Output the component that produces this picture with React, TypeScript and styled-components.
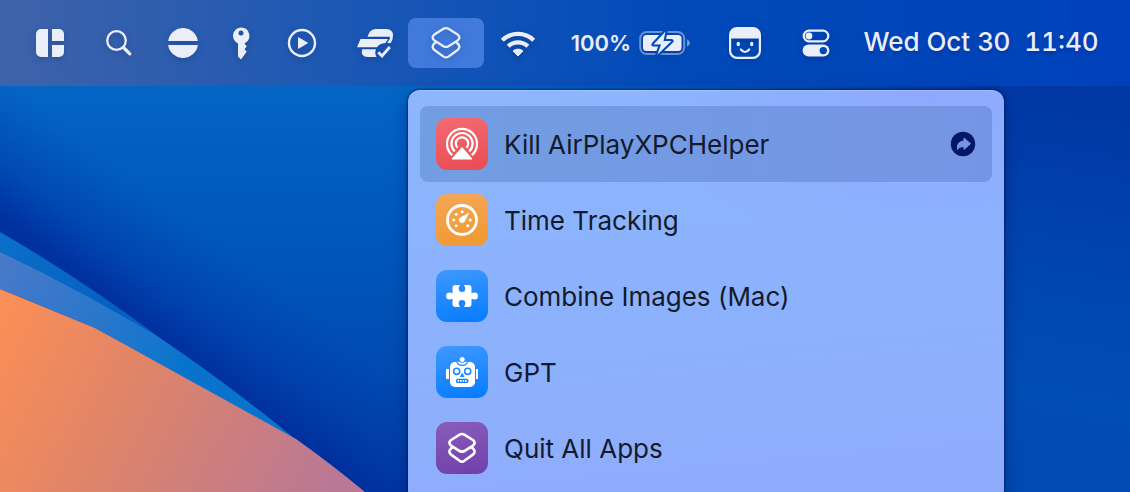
import React from 'react';
import styled, { createGlobalStyle } from 'styled-components';

const GlobalStyle = createGlobalStyle`
  * { box-sizing: border-box; }
  body { margin: 0; font-family: Inter, 'Liberation Sans', sans-serif; }
  button { font: inherit; color: inherit; border: 0; padding: 0; background: none; }
`;

const Desktop = styled.div`
  position: relative;
  min-height: 100vh;
  overflow: hidden;
  background: #0050b8;
`;

const Wallpaper = styled.svg`
  position: absolute;
  inset: 0;
  width: 100%;
  height: 100%;
`;

const MenuBar = styled.header`
  position: relative;
  display: flex;
  justify-content: flex-end;
  align-items: center;
  height: 86px;
  padding-right: 20px;
  color: #e9eef9;
  background: linear-gradient(90deg, #3f63a9 0%, #2059b3 27%, #1253b7 41%, #0149b9 62%, #0041ba 100%);
`;

const BarItem = styled.button<{ $width: number; $active?: boolean }>`
  position: relative;
  display: flex;
  align-items: center;
  justify-content: center;
  width: ${(p) => p.$width}px;
  height: 50px;
  border-radius: 8px;
  background: ${(p) => (p.$active ? '#417adb' : 'transparent')};
  svg { filter: drop-shadow(0 2px 3px rgba(0, 20, 80, 0.25)); }
`;

const BatteryItem = styled(BarItem)`
  gap: 8px;
  font-size: 22px;
  font-weight: 600;
`;

const Clock = styled(BarItem)`
  gap: 14px;
  padding-bottom: 4px;
  font-size: 26px;
  font-weight: 500;
  white-space: nowrap;
  text-shadow: 0 2px 3px rgba(0, 20, 80, 0.25);
`;

const ClockTime = styled.time`
  font-variant-numeric: tabular-nums;
`;

const Anchor = styled.div`
  position: relative;
`;

const Menu = styled.div`
  position: absolute;
  top: 72px;
  left: 0;
  width: 596px;
  padding: 16px 12px;
  border-radius: 12px;
  background:
    radial-gradient(ellipse 300px 160px at 88% 0, #8fa9fd, rgba(143, 169, 253, 0)),
    linear-gradient(175deg, #8cb6fe 0%, #8cb2fd 45%, #8eaffc 75%, #90aafc 100%);
  box-shadow: 0 0 2px 1px rgba(0, 20, 80, 0.55), 0 6px 18px rgba(0, 10, 70, 0.35), inset 0 1px 0 rgba(255, 255, 255, 0.2);
`;

const MenuRow = styled.button<{ $selected?: boolean }>`
  display: flex;
  align-items: center;
  gap: 16px;
  width: 100%;
  height: 76px;
  padding: 0 16px;
  border-radius: 8px;
  color: #131a2b;
  font-size: 26px;
  text-align: left;
  background: ${(p) => (p.$selected ? 'linear-gradient(90deg, #719ee2, #7694e4)' : 'transparent')};
`;

const Tile = styled.span<{ $from: string; $to: string }>`
  display: flex;
  align-items: center;
  justify-content: center;
  width: 52px;
  height: 52px;
  border-radius: 11px;
  color: #fff;
  background: linear-gradient(170deg, ${(p) => p.$from}, ${(p) => p.$to});
`;

const Label = styled.span`
  flex: 1;
`;

const ShortcutsGlyph = ({ size, width }: { size: number; width: number }) => (
  <svg width={size} height={size} viewBox="0 0 34 34" fill="none" stroke="currentColor" strokeWidth={width} strokeLinejoin="round" strokeLinecap="round">
    <path d="M14.500 2.800Q17 1.400 19.500 2.800L28.600 8.500Q32.200 11.500 28.600 14.500L19.500 20.200Q17 21.600 14.500 20.200L5.400 14.500Q1.800 11.500 5.400 8.500Z" />
    <path d="M7 16.200L5.400 17.500Q1.800 20.500 5.400 24L14.500 30.600Q17 32.200 19.500 30.600L28.600 24Q32.200 20.500 28.600 17.500L27 16.200" />
  </svg>
);

const SplitGlyph = () => (
  <svg width="28" height="28" viewBox="0 0 28 28" fill="currentColor">
    <path d="M5 0h7v28H5a5 5 0 0 1-5-5V5a5 5 0 0 1 5-5ZM16 0h7a5 5 0 0 1 5 5v7H16ZM16 16h12v7a5 5 0 0 1-5 5h-7Z" />
  </svg>
);

const SearchGlyph = () => (
  <svg width="26" height="26" viewBox="0 0 26 26" fill="none" stroke="currentColor" strokeLinecap="round">
    <circle cx="10.500" cy="10.500" r="9.300" strokeWidth="2.300" />
    <path d="M17.500 17.500L23.800 23.800" strokeWidth="3.200" />
  </svg>
);

const SplitCircleGlyph = () => (
  <svg width="30" height="30" viewBox="0 0 30 30" fill="currentColor">
    <path d="M.13 13A15 15 0 0 1 29.870 13ZM.13 17H29.870A15 15 0 0 1 .13 17Z" />
  </svg>
);

const KeyGlyph = () => (
  <svg width="18" height="33" viewBox="0 0 18 33" fill="currentColor" fillRule="evenodd">
    <path d="M9 .5a8.300 8.300 0 0 1 3.800 15.700V17l2 2.300-2.300 3 2.300 2.300-2.300 3.200L9 32.500 6 29.600V16.400A8.300 8.300 0 0 1 9 .5ZM9 3.500a2.500 2.500 0 1 0 0 5 2.500 2.500 0 0 0 0-5Z" />
  </svg>
);

const PlayGlyph = () => (
  <svg width="30" height="30" viewBox="0 0 30 30">
    <circle cx="15" cy="15" r="13" fill="none" stroke="currentColor" strokeWidth="2.400" />
    <path d="M11.500 9.700v10.600l9-5.300Z" fill="currentColor" stroke="currentColor" strokeLinejoin="round" />
  </svg>
);

const PrinterGlyph = () => (
  <svg width="38" height="30" viewBox="0 0 38 30" fill="currentColor">
    <path d="M20 1H30Q37 1 37 7.500Q37 12.500 34.500 15.300L31.200 14.800L33.800 11V8.700H11.500Q13.500 1 20 1Z" />
    <path d="M4.500 11H32L29.500 15Q23.500 15.500 21 19.200H1Z" />
    <path d="M6 21.200H20Q18.300 25 20.500 29H11.500Q4.500 29 6 21.200Z" />
    <path d="M22.300 24.200L26 28L33.800 19" fill="none" stroke="currentColor" strokeWidth="2.800" />
  </svg>
);

const WifiGlyph = () => (
  <svg width="36" height="27" viewBox="0 0 36 27">
    <g fill="none" stroke="currentColor" strokeWidth="4.300">
      <path d="M2.300 10.200a22.500 22.500 0 0 1 31.400 0" />
      <path d="M8.200 16.300a14.200 14.200 0 0 1 19.600 0" />
    </g>
    <path d="M18 26l-5-5a7.500 7.500 0 0 1 10 0Z" fill="currentColor" stroke="currentColor" strokeLinejoin="round" />
  </svg>
);

const BatteryGlyph = () => (
  <svg width="52" height="26" viewBox="0 0 52 26">
    <rect x="1.200" y="2" width="44" height="22" rx="6.500" fill="none" stroke="currentColor" strokeOpacity=".45" strokeWidth="2" />
    <path d="M48 9.300q3 1.400 3 3.700t-3 3.700Z" fill="currentColor" opacity=".5" />
    <rect x="4" y="5" width="38.500" height="16" rx="3.500" fill="currentColor" />
    <path d="M26.500 1.500L14.500 14.500h7.500L18.500 24.500 32.500 11h-8Z" fill="currentColor" stroke="#0549b9" strokeWidth="4.200" paintOrder="stroke" strokeLinejoin="round" />
  </svg>
);

const FaceGlyph = () => (
  <svg width="32" height="32" viewBox="0 0 32 32">
    <rect x="1.100" y="1.100" width="29.800" height="29.800" rx="7" fill="none" stroke="currentColor" strokeWidth="2.200" />
    <path d="M1 11.500V8a7 7 0 0 1 7-7h16a7 7 0 0 1 7 7v3.500Z" fill="currentColor" />
    <ellipse cx="9.300" cy="17" rx="1.700" ry="2.200" fill="currentColor" />
    <ellipse cx="22.700" cy="17" rx="1.700" ry="2.200" fill="currentColor" />
    <path d="M11.800 22.500q4.200 5 8.400 0" fill="none" stroke="currentColor" strokeWidth="2.200" strokeLinecap="round" />
  </svg>
);

const ControlGlyph = () => (
  <svg width="28" height="28" viewBox="0 0 28 28">
    <rect x="1.700" y="1.700" width="24.600" height="10.600" rx="5.300" fill="none" stroke="currentColor" strokeWidth="2.200" />
    <circle cx="7" cy="7" r="3.400" fill="currentColor" />
    <rect x=".6" y="15.600" width="26.800" height="12" rx="6" fill="currentColor" />
    <circle cx="21.300" cy="21.600" r="3.700" fill="#0245b8" />
  </svg>
);

const AirplayGlyph = () => (
  <svg width="34" height="34" viewBox="0 0 34 34">
    <g fill="none" stroke="#fff" strokeWidth="2.200">
      <path d="M7.200 28.200a15 15 0 1 1 19.600 0" />
      <path d="M9.800 24.400a10.600 10.600 0 1 1 14.400 0" />
      <path d="M12.500 20.800a6.200 6.200 0 1 1 9 0" />
    </g>
    <path d="M17 20.500L27 32H7Z" fill="#fff" stroke="#fff" strokeLinejoin="round" />
  </svg>
);

const GaugeGlyph = () => (
  <svg width="34" height="34" viewBox="0 0 34 34" fill="#fff">
    <circle cx="17" cy="17" r="14.500" fill="none" stroke="#fff" strokeWidth="2.800" />
    <circle cx="17" cy="8.700" r="1.500" />
    <circle cx="11.200" cy="11.200" r="1.500" />
    <circle cx="8.700" cy="17" r="1.500" />
    <circle cx="11.200" cy="22.800" r="1.500" />
    <circle cx="22.800" cy="22.800" r="1.500" />
    <circle cx="25.300" cy="17" r="1.500" />
    <path d="M23.700 10.300L19.500 18.300a2.800 2.800 0 1 1-3.900-3.700Z" stroke="#fff" strokeWidth=".6" strokeLinejoin="round" />
  </svg>
);

const PuzzleGlyph = () => (
  <svg width="34" height="34" viewBox="0 0 34 34">
    <g fill="#fff">
      <rect x="7.500" y="6" width="19" height="22" rx="3" />
      <rect x="4" y="14.300" width="26" height="5.400" />
      <circle cx="4.500" cy="17" r="3.500" />
      <circle cx="29.500" cy="17" r="3.500" />
    </g>
    <g fill="#2489fe">
      <circle cx="17" cy="9.800" r="3.300" />
      <path d="M14.800 5.800h4.400v3h-4.400Z" />
    </g>
    <g fill="#1a84fe">
      <circle cx="17" cy="24.200" r="3.300" />
      <path d="M14.800 25.200h4.400v3h-4.400Z" />
    </g>
  </svg>
);

const RobotGlyph = () => (
  <svg width="34" height="34" viewBox="0 0 34 34">
    <rect x="5" y="7" width="25" height="25" rx="5" fill="#fff" />
    <path d="M1 14h3v10H1ZM31 14h2v10h-2Z" fill="#fff" />
    <path d="M12 6.800a5.300 4.300 0 0 0 10.400 0" fill="#fff" stroke="#2a8bff" strokeWidth="1.300" />
    <circle cx="17.200" cy="4.500" r="3" fill="#fff" stroke="#2a8bff" strokeWidth="1" />
    <g fill="#fff" stroke="#2387fe" strokeWidth="1.600">
      <circle cx="11.700" cy="16.300" r="3.100" />
      <circle cx="22.700" cy="16.300" r="3.100" />
    </g>
    <path d="M17.200 17.500l2.300 4.500h-4.600Z" fill="#1d86fe" />
    <rect x="10.800" y="23.700" width="12.800" height="4.400" rx="2.200" fill="#1683fe" />
    <path d="M12.600 25.900h9.200" stroke="#fff" strokeWidth="1.800" strokeDasharray="1.600 .9" />
  </svg>
);

const RunGlyph = () => (
  <svg width="26" height="26" viewBox="0 0 26 26">
    <circle cx="13" cy="13" r="12.200" fill="#021766" />
    <path d="M14 7l6.500 5.700L14 18.400v-3q-5 0-6.500 3Q6.300 10.500 14 10Z" fill="#7695e4" stroke="#7695e4" strokeLinejoin="round" />
  </svg>
);

const shortcuts = [
  { name: 'Kill AirPlayXPCHelper', from: '#f36b72', to: '#ea4b53', icon: <AirplayGlyph />, selected: true },
  { name: 'Time Tracking', from: '#f4a759', to: '#f1982f', icon: <GaugeGlyph /> },
  { name: 'Combine Images (Mac)', from: '#3f98ff', to: '#057cfe', icon: <PuzzleGlyph /> },
  { name: 'GPT', from: '#3f98ff', to: '#057cfe', icon: <RobotGlyph /> },
  { name: 'Quit All Apps', from: '#895dba', to: '#713fa9', icon: <ShortcutsGlyph size={32} width={2.8} /> },
];

export default function App() {
  return (
    <Desktop>
      <GlobalStyle />
      <Wallpaper viewBox="0 0 1130 492" preserveAspectRatio="none" aria-hidden="true">
        <defs>
          <linearGradient id="sky" gradientUnits="userSpaceOnUse" x1="0" y1="86" x2="0" y2="492">
            <stop offset="0" stopColor="#0465c5" />
            <stop offset="0.35" stopColor="#0058bc" />
            <stop offset="1" stopColor="#0040a9" />
          </linearGradient>
          <linearGradient id="crest" gradientUnits="userSpaceOnUse" x1="200" y1="365" x2="266" y2="277">
            <stop offset="0" stopColor="#002f9e" stopOpacity="0.95" />
            <stop offset="0.4" stopColor="#0034a2" stopOpacity="0.45" />
            <stop offset="1" stopColor="#003aa6" stopOpacity="0" />
          </linearGradient>
          <linearGradient id="east" gradientUnits="userSpaceOnUse" x1="1080" y1="86" x2="1010" y2="492">
            <stop offset="0" stopColor="#0037a3" />
            <stop offset="0.5" stopColor="#0047b1" />
            <stop offset="0.75" stopColor="#004db5" />
            <stop offset="1" stopColor="#004ab3" />
          </linearGradient>
          <linearGradient id="blend" gradientUnits="userSpaceOnUse" x1="500" y1="0" x2="1000" y2="0">
            <stop offset="0" stopColor="#fff" stopOpacity="0" />
            <stop offset="1" stopColor="#fff" />
          </linearGradient>
          <mask id="eastMask">
            <path d="M0 0H1130V492H0Z" fill="url(#blend)" />
          </mask>
          <linearGradient id="teal" gradientUnits="userSpaceOnUse" x1="0" y1="240" x2="290" y2="430">
            <stop offset="0" stopColor="#0b6fc9" />
            <stop offset="0.4" stopColor="#055fc0" />
            <stop offset="1" stopColor="#0b72ca" />
          </linearGradient>
          <linearGradient id="haze" gradientUnits="userSpaceOnUse" x1="0" y1="260" x2="180" y2="370">
            <stop offset="0" stopColor="#4a79c9" />
            <stop offset="0.8" stopColor="#1976cc" />
            <stop offset="1" stopColor="#0873cc" />
          </linearGradient>
          <linearGradient id="sand" gradientUnits="userSpaceOnUse" x1="0" y1="330" x2="330" y2="500">
            <stop offset="0" stopColor="#fa8e57" />
            <stop offset="0.4" stopColor="#de8469" />
            <stop offset="1" stopColor="#b87896" />
          </linearGradient>
        </defs>
        <path d="M0 0H1130V492H0Z" fill="url(#sky)" />
        <path d="M0 0H1130V492H0Z" fill="url(#crest)" />
        <path d="M0 0H1130V492H0Z" fill="url(#east)" mask="url(#eastMask)" />
        <path d="M0 232Q80 278 160 338Q230 385 300 443L200 400L0 260Z" fill="url(#teal)" />
        <path d="M0 252Q80 290 160 338Q225 383 296 440L95 328L0 289Z" fill="url(#haze)" />
        <path d="M0 289L95 328L296 439Q330 463 365 492H0Z" fill="url(#sand)" />
      </Wallpaper>
      <MenuBar>
        <BarItem $width={84} aria-label="Window layout"><SplitGlyph /></BarItem>
        <BarItem $width={54} aria-label="Search"><SearchGlyph /></BarItem>
        <BarItem $width={74} aria-label="Focus"><SplitCircleGlyph /></BarItem>
        <BarItem $width={42} aria-label="Passwords"><KeyGlyph /></BarItem>
        <BarItem $width={80} aria-label="Play"><PlayGlyph /></BarItem>
        <BarItem $width={66} aria-label="Printer"><PrinterGlyph /></BarItem>
        <Anchor>
          <BarItem $width={76} $active aria-label="Shortcuts" aria-expanded="true"><ShortcutsGlyph size={34} width={2.3} /></BarItem>
          <Menu>
            {shortcuts.map((s) => (
              <MenuRow key={s.name} $selected={s.selected}>
                <Tile $from={s.from} $to={s.to}>{s.icon}</Tile>
                <Label>{s.name}</Label>
                {s.selected && <RunGlyph />}
              </MenuRow>
            ))}
          </Menu>
        </Anchor>
        <BarItem $width={68} aria-label="Wi-Fi"><WifiGlyph /></BarItem>
        <BatteryItem $width={158}>100% <BatteryGlyph /></BatteryItem>
        <BarItem $width={70} aria-label="Assistant"><FaceGlyph /></BarItem>
        <BarItem $width={72} aria-label="Control Center"><ControlGlyph /></BarItem>
        <Clock $width={258}><span>Wed Oct 30</span><ClockTime>11:40</ClockTime></Clock>
      </MenuBar>
    </Desktop>
  );
}
